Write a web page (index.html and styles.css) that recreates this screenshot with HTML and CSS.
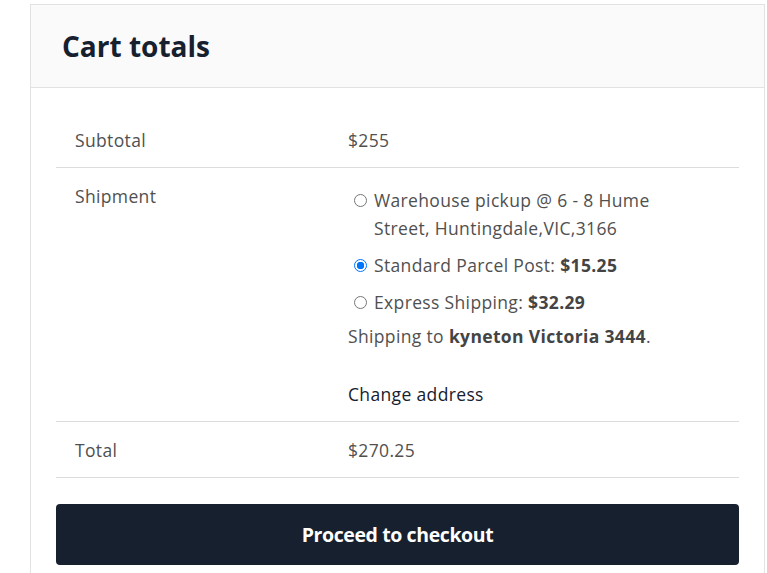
FILE: index.html
```html
<!DOCTYPE html>
<html>
<head>
<meta charset="utf-8">
<link rel="stylesheet" href="styles.css">
</head>
<body>
<div class="card">
  <div class="card-header"><h2 class="title">Cart totals</h2></div>
  <div class="card-body">
    <div class="totals">
      <div class="row">
        <div class="label">Subtotal</div>
        <div class="value">$255</div>
      </div>
      <div class="row">
        <div class="label">Shipment</div>
        <div class="value">
          <ul class="methods">
            <li class="method"><span class="radio"></span><span class="mtext">Warehouse pickup @ 6 - 8 Hume Street, Huntingdale,VIC,3166</span></li>
            <li class="method"><span class="radio checked"></span><span class="mtext">Standard Parcel Post: <b>$15.25</b></span></li>
            <li class="method"><span class="radio"></span><span class="mtext">Express Shipping: <b>$32.29</b></span></li>
          </ul>
          <p class="dest">Shipping to <b>kyneton Victoria 3444</b>.</p>
          <a class="change">Change address</a>
        </div>
      </div>
      <div class="row">
        <div class="label">Total</div>
        <div class="value">$270.25</div>
      </div>
    </div>
    <button class="checkout">Proceed to checkout</button>
  </div>
</div>
</body>
</html>
```
FILE: styles.css
```css
* { box-sizing: border-box; }
body {
  margin: 0;
  padding: 4px 0 0 30px;
  background: #fff;
  font-family: "Open Sans", "Liberation Sans", sans-serif;
  color: #505050;
}
.card {
  width: 735px;
  border: 1px solid #e2e2e2;
  border-bottom: none;
}
.card-header {
  background: #fafafa;
  border-bottom: 1px solid #e2e2e2;
  padding: 24px 31px 24px;
}
.title {
  margin: 0;
  font-size: 28px;
  line-height: 34px;
  font-weight: 700;
  color: #17202e;
}
.card-body {
  padding: 25px 25px 20px;
}
.row {
  display: grid;
  grid-template-columns: 292px 1fr;
  border-bottom: 1px solid #dcdcdc;
  font-size: 17.5px;
  line-height: 28px;
  letter-spacing: 0.35px;
}
.row:first-child .label, .row:first-child .value { padding-top: 13px; }
.label { padding: 14px 0 13px 19px; }
.value { padding: 14px 19px 13px 0; }
.methods {
  list-style: none;
  margin: 4px 0 0;
  padding: 0;
}
.method {
  display: flex;
  align-items: flex-start;
  margin-bottom: 9px;
}
.method:last-child { margin-bottom: 6px; }
.mtext { max-width: 300px; }
.radio {
  flex: none;
  width: 13px;
  height: 13px;
  margin: 8px 7px 0 6px;
  border: 1px solid #767676;
  border-radius: 50%;
  background: #fff;
}
.radio.checked {
  border: 1px solid #0075ff;
  background: radial-gradient(circle, #0075ff 0 3.5px, #fff 4px);
}
.method b, .dest b { color: #444; font-weight: 700; }
.dest { margin: 0 0 30px; }
.change { color: #17202e; display: block; }
.checkout {
  display: block;
  width: 100%;
  margin-top: 26px;
  height: 61px;
  border: none;
  border-radius: 4px;
  background: #17202e;
  color: #fff;
  font-family: "Open Sans", "Liberation Sans", sans-serif;
  font-size: 19.5px;
  font-weight: 700;
  letter-spacing: -0.4px;
}
```
